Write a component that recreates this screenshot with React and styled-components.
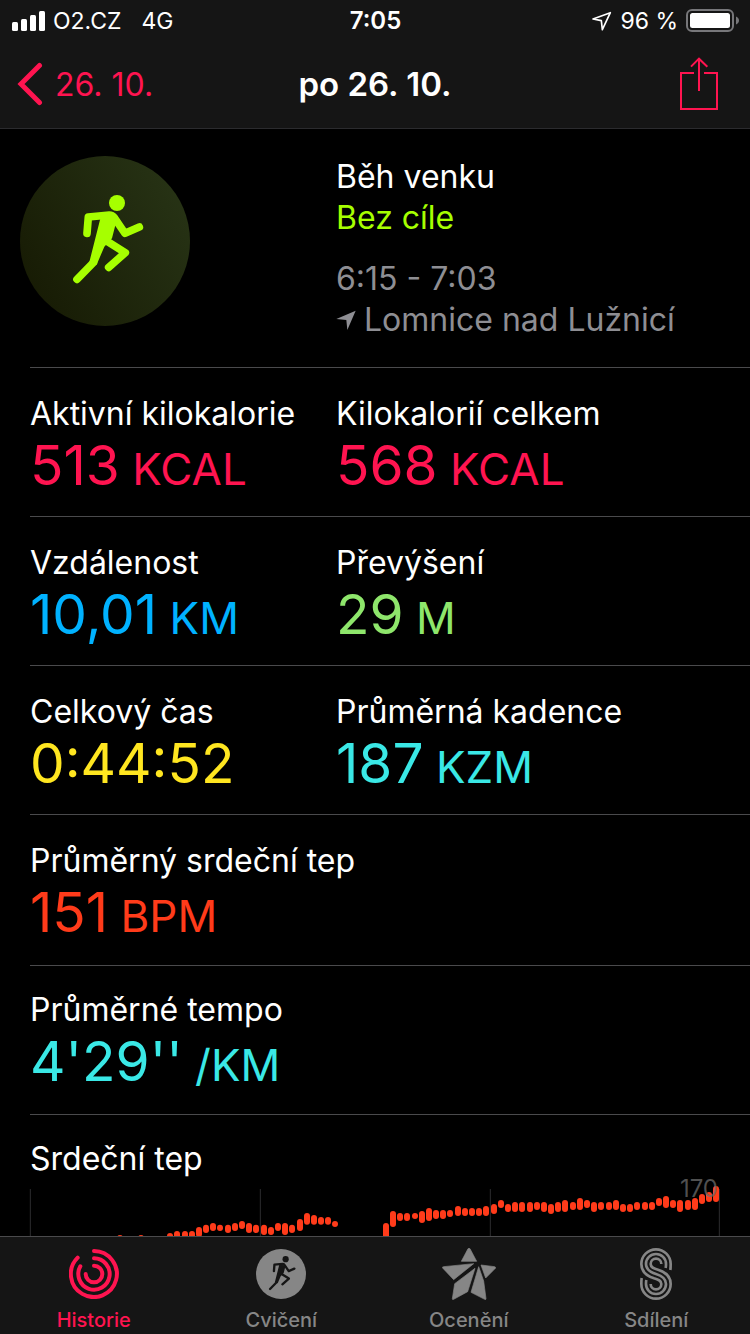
import React from "react";
import styled, { createGlobalStyle, ThemeProvider } from "styled-components";

const theme = {
  bar: "#151515",
  line: "#4a4a4c",
  pink: "#ff1450",
  lime: "#a6ff00",
  muted: "#8e8e93",
  tab: "#868686",
  blue: "#00b2ff",
  green: "#8ee66b",
  yellow: "#ffe620",
  cyan: "#3ae8e6",
  orange: "#ff3b1a",
};

const GlobalStyle = createGlobalStyle`
  *, *::before, *::after { box-sizing: border-box; }
  html { background: #000; }
  body {
    margin: 0;
    color: #fff;
    font-family: Inter, "Noto Sans", "Liberation Sans", sans-serif;
    font-size: 32px;
  }
  svg { display: block; flex: none; }
`;

const Screen = styled.div`
  display: flex;
  flex-direction: column;
  height: 100vh;
  background: #000;
`;

const TopBar = styled.header`
  flex: none;
  background: ${({ theme }) => theme.bar};
  border-bottom: 1px solid #2b2b2e;
`;

const StatusBar = styled.div`
  display: grid;
  grid-template-columns: 1fr auto 1fr;
  align-items: center;
  height: 40px;
  padding: 1px 11px 0 12px;
  font-size: 23px;
  line-height: 28px;
`;

const StatusGroup = styled.div`
  display: flex;
  align-items: center;
  justify-content: ${({ $end }) => ($end ? "flex-end" : "flex-start")};
  gap: 8px;
`;

const Network = styled.span`
  margin-left: 12px;
`;

const Clock = styled.time`
  font-size: 24px;
  font-weight: 600;
`;

const NavBar = styled.div`
  display: grid;
  grid-template-columns: 1fr auto 1fr;
  align-items: center;
  height: 88px;
`;

const BackLink = styled.a`
  display: flex;
  align-items: center;
  gap: 12px;
  padding-left: 17px;
  color: ${({ theme }) => theme.pink};
  text-decoration: none;
`;

const Title = styled.h1`
  margin: 0;
  font-size: 33px;
  font-weight: 600;
`;

const ShareButton = styled.button`
  justify-self: end;
  padding: 0 32px 2px;
  border: 0;
  background: none;
  color: ${({ theme }) => theme.pink};
`;

const Content = styled.main`
  flex: 1;
  min-height: 0;
  overflow-x: hidden;
  overflow-y: auto;
  scrollbar-width: none;
`;

const Columns = styled.div`
  display: grid;
  grid-template-columns: 17fr 23fr;
  margin-left: 30px;
  border-bottom: 1px solid ${({ theme }) => theme.line};
`;

const Summary = styled(Columns)`
  padding: 27px 0 27px;
`;

const Badge = styled.div`
  display: grid;
  place-items: center;
  width: 170px;
  height: 170px;
  margin-left: -10px;
  border-radius: 50%;
  background: linear-gradient(60deg, #171b04 10%, #273315 90%);
  color: ${({ theme }) => theme.lime};
`;

const SummaryText = styled.div`
  display: flex;
  flex-direction: column;
  line-height: 41px;
`;

const ActivityName = styled.span``;

const Goal = styled.span`
  color: ${({ theme }) => theme.lime};
`;

const Period = styled.span`
  margin-top: 20px;
  color: ${({ theme }) => theme.muted};
`;

const Place = styled.span`
  display: flex;
  align-items: center;
  gap: 8px;
  color: ${({ theme }) => theme.muted};
  white-space: nowrap;
`;

const MetricList = styled.dl`
  margin: 0;
`;

const WideMetricList = styled(MetricList)`
  padding-top: 2px;
`;

const PairRow = styled(Columns)`
  padding: 26px 0 21px;
`;

const WideRow = styled.div`
  margin-left: 30px;
  padding: 24px 0 23px;
  border-bottom: 1px solid ${({ theme }) => theme.line};
`;

const Label = styled.dt`
  line-height: 40px;
  white-space: nowrap;
`;

const Value = styled.dd`
  margin: 1px 0 0;
  font-size: 55px;
  line-height: 60px;
  white-space: nowrap;
  color: ${({ $tone, theme }) => theme[$tone]};
`;

const Unit = styled.span`
  font-size: 44px;
  line-height: 44px;
`;

const ChartSection = styled.section`
  margin: 0 30px;
  padding-top: 24px;
`;

const ChartTitle = styled.h2`
  margin: 0 0 10px;
  font-size: 32px;
  font-weight: 400;
  line-height: 40px;
`;

const Chart = styled.svg`
  width: 100%;
  height: auto;
  overflow: visible;
`;

const TabBar = styled.nav`
  display: grid;
  grid-template-columns: repeat(4, 1fr);
  flex: none;
  height: 98px;
  background: ${({ theme }) => theme.bar};
  border-top: 1px solid ${({ theme }) => theme.line};
`;

const Tab = styled.a`
  display: flex;
  flex-direction: column;
  align-items: center;
  gap: 7px;
  padding-top: 10px;
  color: ${({ $active, theme }) => ($active ? theme.pink : theme.tab)};
  font-size: 20px;
  font-weight: 500;
  line-height: 24px;
  text-decoration: none;
`;

const TabIcon = styled.span`
  display: grid;
  place-items: center;
  height: 54px;
`;

const SignalIcon = () => (
  <svg width="33" height="20" viewBox="0 0 33 20" fill="#fff" aria-hidden="true">
    <rect x="0" y="11" width="6" height="9" rx="1.5" />
    <rect x="9" y="8" width="6" height="12" rx="1.5" />
    <rect x="18" y="4" width="6" height="16" rx="1.5" />
    <rect x="27" y="0" width="6" height="20" rx="1.5" />
  </svg>
);

const LocationOutline = () => (
  <svg width="20" height="20" viewBox="0 0 60 60" fill="none" stroke="#fff" strokeWidth="5" strokeLinejoin="round" aria-hidden="true">
    <path d="M3 24 L55 5 L31 56 L28 29 Z" />
  </svg>
);

const BatteryIcon = () => (
  <svg width="53" height="24" viewBox="0 0 53 24" aria-hidden="true">
    <rect x="1" y="1" width="46" height="21" rx="5" fill="none" stroke="#77777a" strokeWidth="2" />
    <rect x="4" y="4" width="40" height="15" rx="2.5" fill="#fff" />
    <path d="M50 7.500 C54 9 54 14 50 15.500 Z" fill="#77777a" />
  </svg>
);

const ChevronIcon = () => (
  <svg width="26" height="44" viewBox="0 0 26 44" fill="none" stroke="currentColor" strokeWidth="5" strokeLinecap="round" strokeLinejoin="miter" aria-hidden="true">
    <path d="M22.500 3.500 L4 22 L22.500 40.500" />
  </svg>
);

const ShareIcon = () => (
  <svg width="38" height="53" viewBox="0 0 114 159" fill="none" stroke="currentColor" strokeWidth="6" aria-hidden="true">
    <path d="M42 48 H3 V156 H111 V48 H72" />
    <path d="M57 102 V5" />
    <path d="M33 29 L57 5 L82 29" />
  </svg>
);

const LocationSolid = () => (
  <svg width="20" height="20" viewBox="0 0 60 60" fill="currentColor" aria-hidden="true">
    <path d="M1 27 L59 2 L34 60 L31 30 Z" />
  </svg>
);

const Runner = ({ limb = 23 }) => (
  <g fill="none" stroke="currentColor" strokeWidth={limb} strokeLinecap="round" strokeLinejoin="round">
    <circle cx="351" cy="189" r="24" fill="currentColor" stroke="none" />
    <path d="M261 280 L265 231 L328 225 Q337 225 342 232 L375 280 L418 261" />
    <path d="M320 303 L376 338 L326 382" />
    <path d="M280 368 L231 418" />
    <path d="M302 232 L346 236 L347 252 L336 295 L313 320 L290 374 L268 366 Z" fill="currentColor" stroke="none" />
  </g>
);

const RunnerIcon = () => (
  <svg width="72" height="90" viewBox="207 168 216 270" overflow="visible" aria-hidden="true">
    <Runner />
  </svg>
);

const RingsIcon = () => (
  <svg width="50" height="50" viewBox="0 0 150 150" fill="none" stroke="currentColor" strokeWidth="12" strokeLinecap="round" aria-hidden="true">
    <path d="M75 6 A69 69 0 1 1 26 26" />
    <path d="M75 28 A47 47 0 1 1 34 52" />
    <path d="M75 50 A25 25 0 1 1 50 75" />
  </svg>
);

const WorkoutIcon = () => (
  <svg width="50" height="50" viewBox="0 0 150 150" aria-hidden="true">
    <circle cx="75" cy="75" r="75" fill="currentColor" />
    <g transform="translate(-48 -43) scale(0.39)" color="#151515">
      <Runner limb={18} />
    </g>
  </svg>
);

const StarIcon = () => (
  <svg width="54" height="52" viewBox="96 57 162 156" fill="currentColor" stroke="currentColor" strokeWidth="2" strokeLinejoin="round" aria-hidden="true">
    <path d="M174 59 Q177 56 180 59 L200 97 L154 97 Z" />
    <path d="M97 116 Q97 113 101 113 L191 104 L131 152 Z" />
    <path d="M195 118 L134 164 L127 209 Q127 213 131 211 L173 188 Z" />
    <path d="M206 113 L183 190 L224 211 Q228 213 228 209 L221 156 Z" />
    <path d="M213 108 L254 113 Q258 114 256 118 L227 147 Z" />
  </svg>
);

const SharingIcon = () => (
  <svg width="32" height="52" viewBox="0 0 96 156" fill="none" stroke="currentColor" strokeWidth="8" aria-hidden="true">
    <path d="M91 66 Q92 60 92 48 A44 44 0 0 0 4 48 C4 72 20 84 42 91 C56 95 64 98 64 108 A16 16 0 0 1 32 108" />
    <path d="M77 60 Q78 56 78 48 A30 30 0 0 0 18 48 C18 66 32 73 48 78 C64 83 78 90 78 108 A30 30 0 0 1 18 108 Q18 100 19 96" />
    <path d="M64 48 A16 16 0 0 0 32 48 C32 58 40 61 54 65 C76 72 92 84 92 108 A44 44 0 0 1 4 108 Q4 96 5 90" />
  </svg>
);

// Heart-rate ranges as [time, high, low] in chart units.
const heartRate = [
  [360, 285, 305], [423, 285, 305], [510, 279, 303], [531, 273, 300], [555, 273, 300],
  [576, 273, 297], [597, 261, 291], [618, 254, 279], [639, 249, 273], [660, 254, 273],
  [684, 254, 279], [705, 249, 273], [726, 243, 267], [747, 249, 279], [768, 254, 279],
  [792, 254, 285], [813, 261, 285], [834, 249, 273], [855, 249, 285], [876, 254, 279],
  [900, 237, 273], [921, 219, 254], [942, 225, 254], [963, 231, 254], [984, 231, 254],
  [1005, 243, 261], [1158, 249, 310], [1179, 213, 261], [1200, 219, 243], [1221, 219, 243],
  [1245, 219, 237], [1266, 213, 249], [1287, 204, 243], [1308, 210, 237], [1329, 210, 237],
  [1350, 210, 231], [1374, 198, 228], [1395, 204, 228], [1416, 204, 228], [1437, 204, 228],
  [1458, 198, 228], [1482, 192, 222], [1503, 180, 204], [1524, 192, 216], [1545, 186, 216],
  [1566, 186, 216], [1590, 186, 216], [1611, 186, 210], [1632, 186, 216], [1653, 192, 222],
  [1674, 186, 216], [1695, 180, 216], [1719, 186, 210], [1740, 174, 210], [1761, 180, 204],
  [1782, 186, 216], [1803, 186, 210], [1827, 186, 210], [1848, 180, 210], [1869, 192, 216],
  [1890, 192, 216], [1911, 186, 210], [1935, 186, 210], [1956, 186, 210], [1977, 174, 198],
  [1998, 168, 204], [2019, 180, 204], [2040, 180, 216], [2064, 180, 210], [2085, 174, 210],
  [2106, 162, 192], [2127, 156, 186], [2148, 138, 186],
];

const HeartRateChart = () => (
  <Chart viewBox="90 147 2070 360" role="img" aria-label="Srdeční tep">
    {[91, 781, 1471, 2158].map((x) => (
      <path key={x} d={`M${x} 147 V507`} stroke="#2c2c2e" strokeWidth="3" />
    ))}
    {heartRate.map(([x, high, low]) => (
      <rect key={x} x={x - 9} y={high} width="18" height={low - high} rx="9" fill={theme.orange} />
    ))}
    <text x="2154" y="171" textAnchor="end" fontSize="72" fill="#6b6b6b" fillOpacity="0.75">
      170
    </text>
  </Chart>
);

const Metric = ({ label, value, unit, tone }) => (
  <div>
    <Label>{label}</Label>
    <Value $tone={tone}>
      {value}
      {unit && <Unit> {unit}</Unit>}
    </Value>
  </div>
);

const pairs = [
  [
    { label: "Aktivní kilokalorie", value: "513", unit: "KCAL", tone: "pink" },
    { label: "Kilokalorií celkem", value: "568", unit: "KCAL", tone: "pink" },
  ],
  [
    { label: "Vzdálenost", value: "10,01", unit: "KM", tone: "blue" },
    { label: "Převýšení", value: "29", unit: "M", tone: "green" },
  ],
  [
    { label: "Celkový čas", value: "0:44:52", tone: "yellow" },
    { label: "Průměrná kadence", value: "187", unit: "KZM", tone: "cyan" },
  ],
];

const wide = [
  { label: "Průměrný srdeční tep", value: "151", unit: "BPM", tone: "orange" },
  { label: "Průměrné tempo", value: "4'29''", unit: "/KM", tone: "cyan" },
];

const tabs = [
  { label: "Historie", Icon: RingsIcon, active: true },
  { label: "Cvičení", Icon: WorkoutIcon },
  { label: "Ocenění", Icon: StarIcon },
  { label: "Sdílení", Icon: SharingIcon },
];

export default function App() {
  return (
    <ThemeProvider theme={theme}>
      <GlobalStyle />
      <Screen>
        <TopBar>
          <StatusBar>
            <StatusGroup>
              <SignalIcon />
              <span>O2.CZ</span>
              <Network>4G</Network>
            </StatusGroup>
            <Clock>7:05</Clock>
            <StatusGroup $end>
              <LocationOutline />
              <span>96 %</span>
              <BatteryIcon />
            </StatusGroup>
          </StatusBar>
          <NavBar>
            <BackLink href="#historie">
              <ChevronIcon />
              26. 10.
            </BackLink>
            <Title>po 26. 10.</Title>
            <ShareButton type="button" aria-label="Sdílet">
              <ShareIcon />
            </ShareButton>
          </NavBar>
        </TopBar>
        <Content>
          <Summary>
            <Badge>
              <RunnerIcon />
            </Badge>
            <SummaryText>
              <ActivityName>Běh venku</ActivityName>
              <Goal>Bez cíle</Goal>
              <Period>6:15 - 7:03</Period>
              <Place>
                <LocationSolid />
                Lomnice nad Lužnicí
              </Place>
            </SummaryText>
          </Summary>
          <MetricList>
            {pairs.map((pair) => (
              <PairRow key={pair[0].label}>
                {pair.map((item) => (
                  <Metric key={item.label} {...item} />
                ))}
              </PairRow>
            ))}
          </MetricList>
          <WideMetricList>
            {wide.map((item) => (
              <WideRow key={item.label}>
                <Metric {...item} />
              </WideRow>
            ))}
          </WideMetricList>
          <ChartSection>
            <ChartTitle>Srdeční tep</ChartTitle>
            <HeartRateChart />
          </ChartSection>
        </Content>
        <TabBar>
          {tabs.map(({ label, Icon, active }) => (
            <Tab key={label} href={`#${label}`} $active={active} aria-current={active ? "page" : undefined}>
              <TabIcon>
                <Icon />
              </TabIcon>
              {label}
            </Tab>
          ))}
        </TabBar>
      </Screen>
    </ThemeProvider>
  );
}
